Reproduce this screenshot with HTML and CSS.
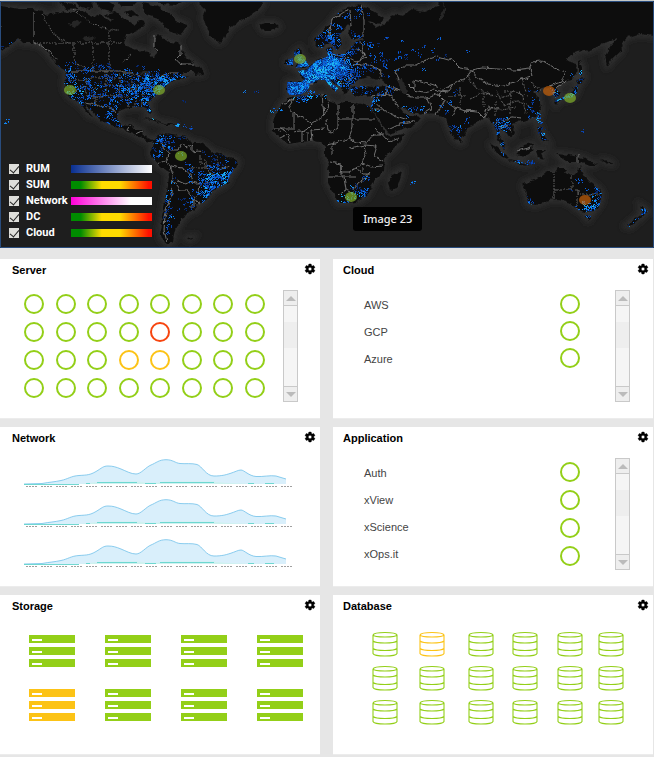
FILE: index.html
```html
<!DOCTYPE html>
<html lang="en">
<head>
<meta charset="utf-8">
<title>Operations dashboard</title>
<link rel="stylesheet" href="styles.css">
</head>
<body>
<svg class="defs" aria-hidden="true">
  <symbol id="gear" viewBox="0 0 24 24"><path d="M19.43 12.98c.04-.32.07-.64.07-.98s-.03-.66-.07-.98l2.11-1.65c.19-.15.24-.42.12-.64l-2-3.46c-.12-.22-.39-.3-.61-.22l-2.49 1c-.52-.4-1.08-.73-1.69-.98l-.38-2.65A.49.49 0 0 0 14 2h-4c-.25 0-.46.18-.49.42l-.38 2.65c-.61.25-1.17.59-1.69.98l-2.49-1c-.23-.09-.49 0-.61.22l-2 3.46c-.13.22-.07.49.12.64l2.11 1.65c-.04.32-.07.65-.07.98s.03.66.07.98l-2.11 1.65c-.19.15-.24.42-.12.64l2 3.46c.12.22.39.3.61.22l2.49-1c.52.4 1.08.73 1.69.98l.38 2.65c.03.24.24.42.49.42h4c.25 0 .46-.18.49-.42l.38-2.65c.61-.25 1.17-.59 1.69-.98l2.49 1c.23.09.49 0 .61-.22l2-3.46c.12-.22.07-.49-.12-.64zM12 15.5A3.5 3.5 0 1 1 12 8.500a3.500 3.500 0 0 1 0 7z" stroke="#000" stroke-width=".8"/></symbol>
  <symbol id="chart" viewBox="0 0 268 28" preserveAspectRatio="none">
    <path d="M0 25L18 24.500C26 23 30 23 37 21.500S47 17 55 16.500S66 16 72 12.500S79 7 84 7S92 8 97 10S107 15 112 15S122 8 127 6S135 .7 142 .7S151 4 156 4.500S168 4 173 5.500S182 17 190 17S201 16 206 14.500S214 11 217 11S225 17 232 17.500S246 16 252 17L262 20V25Z" fill="#d9effb"/>
    <path d="M0 25L18 24.500C26 23 30 23 37 21.500S47 17 55 16.500S66 16 72 12.500S79 7 84 7S92 8 97 10S107 15 112 15S122 8 127 6S135 .7 142 .7S151 4 156 4.500S168 4 173 5.500S182 17 190 17S201 16 206 14.500S214 11 217 11S225 17 232 17.500S246 16 252 17L262 20" fill="none" stroke="#6fc0ea" stroke-width=".8"/>
    <path d="M55 25Q75 22 95 22.500H115Q128 25 140 22.500H190Q205 25 262 25Z" fill="#cff2f0"/>
    <path d="M0 25.500H55M62 24.500h4M73 23.500h40M121 24.500h11M136 23.500h54M224 24.500h6M241 24.500h9" fill="none" stroke="#62d4cc" stroke-width=".9"/>
    <path d="M2 27.500H268" fill="none" stroke="#888" stroke-width=".8" stroke-dasharray="2 1 2 1 2 1 2 4"/>
  </symbol>
  <symbol id="db" viewBox="0 0 26 26"><path d="M1 4V22.500Q2 25 13 25T25 22.500V4M1 4Q2 1.500 13 1.500T25 4Q24 6 13 6T1 4M1 10Q3 12 13 12T25 10M1 17.500Q3 19.500 13 19.500T25 17.500" fill="none" stroke="currentColor" stroke-width="1.100"/></symbol>
</svg>

<header class="world">
  <svg class="map" viewBox="0 0 654 248" role="img" aria-label="World traffic map">
    <defs>
      <path id="land" d="M0 6L20 9L33 9L42 11L46 16L56 12L70 13L80 10L92 17L100 14L110 22L118 18L128 20L134 25L140 20L146 22L142 28L134 32L126 35L123 42L127 46L134 49L142 51L149 52L150 56L154 57L157 52L154 46L154 38L159 36L165 38L171 42L178 43L181 49L184 55L193 62L200 67L203 74L196 75L192 72L184 72L181 75L188 78L178 79L170 82L165 86L160 92L155 96L148 103L152 112L149 114L146 108L140 106L134 107L127 107L119 110L117 118L121 125L127 126L131 124L134 126L133 130L143 130L144 136L150 139L155 140L152 142L146 141L136 135L128 131L120 128L111 125L102 121L96 116L88 107L84 103L88 111L93 117L89 115L83 107L77 101L71 98L66 92L64 83L67 72L61 68L53 60L48 53L40 45L33 43L24 43L18 39L13 43L6 48L0 52Z
      M76 2L86 0L94 4L90 9L80 7ZM96 3L108 0L116 6L112 12L102 10ZM118 1L138 0L132 6L122 6ZM142 3L158 6L170 14L176 20L187 25L184 30L181 35L173 32L166 27L162 22L152 16L144 12ZM124 12L132 10L138 16L130 17ZM152 0L184 0L176 5L160 4ZM60 2L74 4L78 9L66 10ZM104 14L116 12L124 19L112 20Z
      M200 0L201 5L206 10L203 18L207 28L211 37L219 43L224 38L230 28L242 20L250 15L258 10L263 4L262 0ZM259 25L265 23L275 23L279 27L272 31L264 31Z
      M154 141L158 136L164 134L172 135L180 136L186 137L192 143L200 143L206 146L212 152L222 155L232 158L238 161L236 168L230 175L228 182L222 186L213 190L208 198L202 204L195 204L196 210L188 212L184 218L180 219L180 224L176 228L174 234L173 242L168 245L162 240L160 230L163 215L165 200L168 185L169 172L160 166L153 158L150 152L153 147ZM143 119L152 118L160 122L169 124L177 125L166 125L158 122L151 120ZM187 238L193 237L190 240Z
      M288 99L295 97L308 95L326 94L329 101L338 104L345 102L352 102L362 104L369 106L374 114L380 124L386 134L390 136L404 134L400 142L392 150L384 158L383 172L374 181L371 188L368 194L364 198L356 202L344 203L338 203L334 194L328 183L328 170L329 165L325 156L325 147L320 142L310 141L300 142L288 144L280 138L273 131L273 122L275 115L282 104ZM402 170L400 180L396 188L391 190L389 182L392 175Z
      M287 82L302 82L305 79L298 71L306 70L311 66L316 61L322 59L328 56L327 49L331 48L334 54L345 54L350 49L352 43L362 41L364 38L352 39L348 34L349 29L352 25L347 26L343 32L339 37L342 43L337 50L333 47L330 42L322 48L316 46L315 39L320 34L329 25L338 13L348 7L361 5L373 11L384 19L380 24L368 21L376 28L388 22L392 14L404 16L410 10L425 12L438 6L439 0L654 0V36L640 34L628 37L621 42L622 50L614 58L607 66L605 55L610 46L618 38L612 40L600 45L590 50L578 52L570 56L566 60L576 64L578 72L570 80L562 84L556 88L560 93L556 98L552 93L549 87L540 88L538 92L533 92L539 98L541 108L536 116L527 120L518 122L512 124L514 132L511 137L504 131L500 128L499 136L504 143L505 150L500 144L497 136L494 124L488 118L484 118L478 122L468 127L464 134L459 141L454 139L449 128L446 118L438 114L424 113L416 114L409 112L404 107L400 108L406 115L412 115L421 117L414 125L400 130L389 134L384 126L376 116L370 106L373 100L373 96L362 97L352 94L350 88L360 86L375 87L389 86L382 80L374 78L368 76L360 78L355 83L350 86L348 93L344 94L342 88L334 82L330 78L332 84L338 88L336 92L329 85L325 80L318 80L310 84L308 90L300 95L290 95L287 92Z
      M294 52L300 48L301 55L306 61L309 66L296 68L299 62L295 58ZM286 60L293 58L293 65L286 65ZM579 60L582 66L582 75L579 76ZM576 80L584 78L581 83L578 83ZM578 84L577 92L574 97L567 98L558 101L556 105L554 101L562 98L570 94L574 88ZM538 113L541 114L538 119ZM537 125L541 128L540 134L544 136L548 142L543 141L539 134ZM460 138L463 142L460 143Z
      M489 143L498 148L510 158L508 160L496 152ZM508 160L520 162L532 165L520 164ZM516 152L524 145L533 143L532 152L524 157L517 155ZM536 150L546 150L541 154L544 160L538 158ZM556 154L570 155L584 158L597 165L590 165L578 162L568 162L560 158ZM600 159L608 161L615 165L606 163Z
      M524 183L537 179L548 172L555 172L558 168L566 168L564 172L573 176L577 172L580 166L583 175L590 182L598 188L602 194L600 204L594 211L585 212L578 210L572 204L560 199L548 200L537 205L528 204L527 196L523 188ZM585 215L591 216L588 220ZM640 205L648 211L640 218L630 227L626 226L636 218L642 213Z"/>
      <clipPath id="coast"><use href="#land"/></clipPath>
      <filter id="rough" x="0" y="0" width="100%" height="100%"><feTurbulence type="fractalNoise" baseFrequency=".16" numOctaves="3" seed="4"/><feDisplacementMap in="SourceGraphic" scale="5" xChannelSelector="R" yChannelSelector="G"/></filter>
      <filter id="glow" x="-5%" y="-5%" width="110%" height="110%"><feGaussianBlur stdDeviation="3"/></filter>
    </defs>
    <rect width="654" height="248" fill="#1e1e1e"/>
    <use href="#land" fill="#303030" stroke="#303030" stroke-width="5" filter="url(#glow)"/>
    <use href="#land" fill="#0f0f0f" filter="url(#rough)"/>
    <g fill="#282828" filter="url(#rough)">
      <path d="M396 79L403 78L404 84L408 90L406 95L401 93L400 87ZM68 24L76 20L82 23L74 27ZM82 38L92 36L96 39L88 41ZM140 73L148 71L152 75L144 75ZM146 78L148 84L145 84ZM152 80L158 79L156 82ZM442 0L446 10L442 20L438 22L444 8Z"/>
    </g>
    <g class="borders" filter="url(#rough)">
      <path d="M33 10V43L40 45L50 52L56 61M71 71H120L123 73H134L142 77M152 80L162 76L170 73H178M84 102L96 104L103 108L110 106L115 113M128 130L131 125M136 134L143 131M154 36V46L158 51M181 44V55L176 60L181 64H196"/>
      <path d="M160 140L164 148L169 154L166 162L171 168L173 176L172 194L168 204L165 216L164 230L167 242M170 150H178L182 144L187 148L192 144M192 144V152L198 151L204 152M171 166L182 168L190 174L192 182L185 184L176 180M192 182L200 184L199 191L193 200L200 204M193 200V208M166 160L158 164M173 181L180 190L188 190L192 195"/>
      <path d="M283 104L294 99L288 108L294 113L312 124L324 116L322 94M294 113V129H274M312 124L306 130L294 132M302 140V130M308 141V132M312 141L311 130L325 129M324 116L330 100M338 105V128L332 132L328 130L326 119M353 103V119H375M353 119V128L349 138L356 142L366 143L374 134L384 134M353 119H338M376 128L389 142L398 138M326 145L336 143L349 138M332 155V146M350 148L364 145L366 154L362 163L356 168L349 172H341V164L330 162M364 145L377 146L374 156L383 161M362 163L372 167L382 166M328 177H356M341 164V177M344 178L346 190L352 193L358 183L365 178L370 172M338 195L346 190M356 168L363 174L370 174M279 129L286 132M290 142L288 134L280 138M363 166V172"/>
      <path d="M290 83L291 94M304 82L312 84M315 62L320 70L318 79M323 58L326 68L320 70M326 68L336 66L346 70M333 54L346 58L344 66M328 40L332 20L344 12L350 10L351 26M361 5L364 20V37M352 48L360 50L366 58L356 62L347 57M346 70L352 76L347 84M350 65L364 64L382 70L380 78M330 74L338 76L344 84M352 76L356 80M361 42L364 54L360 60M371 96L386 94L394 100L398 108M386 94L388 86L400 90M406 95L416 98L428 98L432 108L424 113M399 80L395 72L402 66L416 66L424 61L438 56L452 60L460 68L472 70L466 78L454 84L448 92L432 90L424 92L414 90L408 84M472 70L482 68L498 69L514 70L530 68L532 62L542 61L554 68L566 72L562 82L550 86M472 70L476 76L488 84L504 86L520 80L532 76L530 68M454 84L446 88L438 94L444 100L456 108L464 111L478 112L484 118M444 100L440 108L436 114M456 108L452 116M464 111L478 110M414 90V80L428 84L440 88M428 98L438 94M373 100L384 110L396 116L408 120M376 98L386 94M484 118L487 110L492 106M495 124L499 119L507 120L512 117L522 118M500 128L506 124L511 132M384 110H374M388 130L400 124L414 122M556 88L566 82M517 151L532 147M578 155V162"/>
      <path class="dashed" d="M42 14L48 24L56 36L68 43M34 43H122M74 44V60L84 68M93 44V70M109 31V70M73 10L94 25L109 30H119M121 63L132 54M71 80H86V96M86 78H106M106 71V94M76 92L84 85M106 78H120M106 85H124M120 71V96M124 80L132 90L138 96M132 75V85H148M136 87H154M126 90H142M128 96V106M136 94V106M142 94V106M116 96H130M94 88V104M86 96H116M96 96V104M150 82V90M192 168H206V160M200 155V164L212 166M206 168L214 176L206 184M218 156V170L230 166M212 166V182M196 184H214M554 173V200M572 176V190M554 190H577M577 190V210M577 194H600M466 76L476 88L492 96M470 98L484 92L500 98L514 92L528 96M484 92V108M496 90L504 106L516 100L530 106M496 102V116M510 94V114M520 90L526 114M488 106L502 110L516 108M530 82L540 90M522 78L526 92M448 96L466 96M460 86V106M504 92H522"/>
    </g>
    <path clip-path="url(#coast)" fill="#0a53c8" fill-opacity=".62" d="M286 57L294 51L304 58L310 66L324 55L340 58L350 66L346 76L332 78L339 92L322 82L308 90L300 97H286V80L304 80L296 72Z"/>
    <g id="lights" clip-path="url(#coast)"></g>
    <g id="sparks"></g>
    <g fill="#85b52b" fill-opacity=".68">
      <ellipse cx="70" cy="90" rx="6" ry="5"/><ellipse cx="159" cy="90" rx="6" ry="5"/><ellipse cx="181" cy="156" rx="6" ry="5"/><ellipse cx="300" cy="59" rx="6" ry="5"/><ellipse cx="351" cy="197" rx="6" ry="5"/><ellipse cx="570" cy="98" rx="6" ry="5"/>
    </g>
    <g fill="#c9630a" fill-opacity=".7"><ellipse cx="549" cy="91" rx="6" ry="5"/><ellipse cx="585" cy="200" rx="6" ry="5"/></g>
    <path d="M0 .5H654" stroke="#c4c8c6"/>
    <path d="M.5 1.500H653.500V247.500H.5Z" fill="none" stroke="#294c7d"/>
  </svg>
  <div class="legend">
    <label><input type="checkbox" checked><span>RUM</span><i class="scale blue"></i></label>
    <label><input type="checkbox" checked><span>SUM</span><i class="scale heat"></i></label>
    <label><input type="checkbox" checked><span>Network</span><i class="scale pink"></i></label>
    <label><input type="checkbox" checked><span>DC</span><i class="scale heat"></i></label>
    <label><input type="checkbox" checked><span>Cloud</span><i class="scale heat"></i></label>
  </div>
  <div class="tooltip">Image 23</div>
</header>

<main class="panels">
  <section class="panel">
    <div class="head"><h2>Server</h2><button class="settings" aria-label="Server settings"><svg><use href="#gear"/></svg></button></div>
    <div class="body">
      <div class="servers">
        <i class="ring"></i><i class="ring"></i><i class="ring"></i><i class="ring"></i><i class="ring"></i><i class="ring"></i><i class="ring"></i><i class="ring"></i>
        <i class="ring"></i><i class="ring"></i><i class="ring"></i><i class="ring"></i><i class="ring critical"></i><i class="ring"></i><i class="ring"></i><i class="ring"></i>
        <i class="ring"></i><i class="ring"></i><i class="ring"></i><i class="ring warning"></i><i class="ring warning"></i><i class="ring"></i><i class="ring"></i><i class="ring"></i>
        <i class="ring"></i><i class="ring"></i><i class="ring"></i><i class="ring"></i><i class="ring"></i><i class="ring"></i><i class="ring"></i><i class="ring"></i>
      </div>
      <div class="scroller"><button class="up" aria-label="Scroll up"></button><div class="track"></div><button class="down" aria-label="Scroll down"></button></div>
    </div>
  </section>

  <section class="panel">
    <div class="head"><h2>Cloud</h2><button class="settings" aria-label="Cloud settings"><svg><use href="#gear"/></svg></button></div>
    <div class="body">
      <ul class="names"><li>AWS</li><li>GCP</li><li>Azure</li></ul>
      <div class="states"><i class="ring"></i><i class="ring"></i><i class="ring"></i></div>
      <div class="scroller"><button class="up" aria-label="Scroll up"></button><div class="track"></div><button class="down" aria-label="Scroll down"></button></div>
    </div>
  </section>

  <section class="panel">
    <div class="head"><h2>Network</h2><button class="settings" aria-label="Network settings"><svg><use href="#gear"/></svg></button></div>
    <div class="charts"><svg><use href="#chart"/></svg><svg><use href="#chart"/></svg><svg><use href="#chart"/></svg></div>
  </section>

  <section class="panel">
    <div class="head"><h2>Application</h2><button class="settings" aria-label="Application settings"><svg><use href="#gear"/></svg></button></div>
    <div class="body">
      <ul class="names"><li>Auth</li><li>xView</li><li>xScience</li><li>xOps.it</li></ul>
      <div class="states loose"><i class="ring"></i><i class="ring"></i><i class="ring"></i><i class="ring"></i></div>
      <div class="scroller"><button class="up" aria-label="Scroll up"></button><div class="track"></div><button class="down" aria-label="Scroll down"></button></div>
    </div>
  </section>

  <section class="panel">
    <div class="head"><h2>Storage</h2><button class="settings" aria-label="Storage settings"><svg><use href="#gear"/></svg></button></div>
    <div class="storage">
      <div class="rack"><i></i><i></i><i></i></div><div class="rack"><i></i><i></i><i></i></div><div class="rack"><i></i><i></i><i></i></div><div class="rack"><i></i><i></i><i></i></div>
      <div class="rack warning"><i></i><i></i><i></i></div><div class="rack"><i></i><i></i><i></i></div><div class="rack"><i></i><i></i><i></i></div><div class="rack"><i></i><i></i><i></i></div>
    </div>
  </section>

  <section class="panel">
    <div class="head"><h2>Database</h2><button class="settings" aria-label="Database settings"><svg><use href="#gear"/></svg></button></div>
    <div class="databases">
      <svg><use href="#db"/></svg><svg class="warning"><use href="#db"/></svg><svg><use href="#db"/></svg><svg><use href="#db"/></svg><svg><use href="#db"/></svg><svg><use href="#db"/></svg>
      <svg><use href="#db"/></svg><svg><use href="#db"/></svg><svg><use href="#db"/></svg><svg><use href="#db"/></svg><svg><use href="#db"/></svg><svg><use href="#db"/></svg>
      <svg><use href="#db"/></svg><svg><use href="#db"/></svg><svg><use href="#db"/></svg><svg><use href="#db"/></svg><svg><use href="#db"/></svg><svg><use href="#db"/></svg>
    </div>
  </section>
</main>
<script src="lights.js"></script>
</body>
</html>
```
FILE: styles.css
```css
* { box-sizing: border-box; }
body { margin: 0; background: #e6e6e6; color: #000; font: 11px/16px "Liberation Sans", Arial, sans-serif; }
button { padding: 0; border: 0; background: none; }
.defs { position: absolute; width: 0; height: 0; }

.world { position: relative; background: #1e1e1e; }
.map { display: block; width: 100%; height: auto; }
.borders { fill: none; stroke: #8a8a8a; stroke-width: .8; }
.dashed { stroke: #777; stroke-dasharray: 2 1; }
.legend { position: absolute; left: 9px; bottom: 7px; color: #fff; font: bold 11px/16px Roboto, sans-serif; }
.legend label { display: grid; grid-template-columns: 17px 45px 81px; align-items: center; height: 16px; }
.legend input { appearance: none; display: grid; place-items: start center; width: 10px; height: 10px; margin: 0; background: #dededa; }
.legend input:checked::before { content: ""; width: 4px; height: 8px; border: solid #222; border-width: 0 1px 1px 0; transform: rotate(40deg); }
.scale { height: 8px; }
.blue { background: linear-gradient(90deg, #092f91, #fff); }
.heat { background: linear-gradient(90deg, #008c00 12%, #ffdc00 38%, #ffdc00 60%, #ff1000 96%); }
.pink { background: linear-gradient(90deg, #ff00d8, #fff 74%); }
.tooltip { position: absolute; left: 54%; bottom: 17px; padding: 4px 10px; border-radius: 3px; background: #020202; color: #eee; font: 500 11px/16px "Noto Sans", sans-serif; }

.panels { display: grid; grid-template-columns: 1fr 1fr; gap: 8px 13px; padding: 11px 1px 2px 0; }
.panel { min-height: 160px; background: #fff; border-bottom: 1px solid #ececec; }
.head { display: flex; justify-content: space-between; padding: 4px 4px 0 12px; }
.panel:nth-child(even) .head { padding-left: 10px; }
.head h2 { margin: 0; font-size: 11px; line-height: 14px; }
.settings { width: 12px; height: 12px; }
.settings svg { display: block; width: 12px; height: 12px; }
.body { display: flex; align-items: flex-start; padding: 13px 22px 0 24px; }
.panel:nth-child(even) .body { padding-right: 23px; }
.servers { flex: 1; display: grid; grid-template-columns: repeat(8, 20px); justify-content: space-between; gap: 8px 0; margin: 4px 18px 0 0; }
.ring { display: block; width: 20px; height: 20px; border: 2px solid #93cf18; border-radius: 50%; }
.ring.warning { border-color: #fcc316; }
.ring.critical { border-color: #f7450f; }
.names { flex: 1; margin: 2px 0 0; padding: 0 0 0 7px; list-style: none; color: #444; line-height: 27px; }
.states { display: grid; gap: 7px; margin: 4px 35px 0 0; }
.states.loose { gap: 8px; }
.scroller { display: flex; flex-direction: column; width: 15px; height: 112px; border: 1px solid #c9c9c9; background: #f5f5f5; }
.scroller button { display: grid; place-items: center; height: 14px; background: #eee; }
.scroller button::before { content: ""; border: solid transparent; border-width: 0 5px; }
.scroller .up::before { border-bottom: 5px solid #bbb; }
.scroller .down::before { border-top: 5px solid #bbb; }
.track { flex: 1; border: solid #c9c9c9; border-width: 1px 0; background: linear-gradient(#f5f5f5 20%, #eee 20% 52%, #f5f5f5 52%); }

.charts { display: grid; gap: 12px; padding: 14px 28px 0 24px; }
.charts svg { display: block; width: 100%; height: 28px; }

.storage { display: grid; grid-template-columns: repeat(4, 46px); justify-content: space-between; gap: 22px 0; padding: 22px 17px 0 29px; }
.rack { display: grid; gap: 4px; color: #93cf18; }
.rack.warning { color: #fcc316; }
.rack i { height: 8px; padding: 4px 3px 0; background: currentColor; }
.rack i::before { content: ""; display: block; width: 10px; height: 2px; background: #fff; }

.databases { display: grid; grid-template-columns: 47fr 49fr 45fr 45fr 41fr 26px; gap: 8px 0; padding: 18px 29px 0 39px; color: #93cf18; }
.databases svg { display: block; width: 26px; height: 26px; }
.databases .warning { color: #fcc316; }
```
FILE: lights.js
```js
// Scatters city lights around population centres: [x, y, spread x, spread y, count, brightness]
const inland = [
  [145, 88, 16, 10, 620, .45], [160, 83, 9, 5, 260, .7], [125, 95, 18, 12, 240, .35], [96, 90, 14, 8, 170, .4],
  [70, 75, 4, 6, 80, .5], [74, 96, 5, 6, 110, .7], [85, 68, 14, 4, 70, .25], [112, 118, 10, 6, 90, .4],
  [147, 109, 3, 4, 60, .7], [115, 72, 18, 6, 70, .2], [180, 77, 9, 3, 60, .3],
  [164, 143, 5, 5, 110, .4], [155, 153, 3, 4, 40, .3], [180, 136, 8, 3, 50, .3],
  [218, 180, 9, 6, 380, .7], [206, 192, 6, 6, 170, .6], [226, 163, 10, 8, 150, .3], [200, 172, 14, 10, 90, .2],
  [168, 205, 3, 14, 80, .4], [190, 205, 8, 6, 60, .4],
  [298, 88, 9, 6, 480, .7], [312, 73, 9, 7, 600, .75], [324, 66, 10, 7, 640, .75], [302, 60, 5, 7, 230, .6],
  [289, 62, 3, 3, 60, .4], [338, 64, 9, 7, 400, .5], [331, 84, 5, 6, 220, .8], [346, 78, 8, 7, 230, .3],
  [330, 41, 9, 10, 280, .4], [350, 12, 12, 5, 60, .2], [352, 42, 10, 7, 100, .3], [366, 66, 14, 10, 150, .2],
  [372, 89, 14, 4, 90, .25], [374, 103, 3, 4, 50, .6], [390, 55, 22, 10, 70, .3], [430, 60, 26, 10, 30, .2],
  [412, 113, 7, 5, 40, .5], [452, 112, 12, 14, 60, .35], [456, 128, 5, 8, 30, .3],
  [500, 127, 5, 5, 150, .5], [504, 144, 3, 6, 60, .6], [535, 103, 7, 10, 55, .4], [553, 95, 3, 4, 80, .7],
  [566, 98, 7, 3, 160, .7], [577, 85, 3, 7, 80, .5], [539, 116, 2, 3, 30, .8], [541, 132, 4, 5, 50, .5],
  [525, 162, 12, 2, 80, .6], [360, 190, 5, 6, 110, .5], [344, 202, 8, 3, 60, .6], [590, 208, 8, 4, 180, .7],
  [599, 194, 4, 8, 110, .6], [528, 201, 3, 4, 40, .7], [585, 182, 9, 9, 40, .4], [643, 212, 6, 6, 70, .6],
  [632, 223, 5, 3, 50, .6], [588, 217, 3, 2, 25, .6], [14, 42, 6, 4, 20, .4], [265, 30, 4, 2, 12, .5]
];
const islands = [
  [175, 124, 9, 1, 18, .6], [253, 92, 4, 1, 6, .5], [274, 109, 3, 2, 9, .6], [4, 121, 2, 1, 6, .7],
  [413, 182, 3, 1, 6, .5], [585, 131, 2, 1, 4, .4], [527, 162, 10, 1, 22, .6], [538, 116, 1, 3, 10, .8],
  [541, 132, 3, 5, 18, .5], [312, 92, 4, 1, 14, .5], [189, 129, 2, 3, 6, .3], [180, 102, 1, 1, 3, .4]
];
const colors = ["#07296f", "#0a43ad", "#0a62d8", "#128bf0", "#1fb9ea"];
let seed = 1729;
const random = () => (seed = (seed * 16807) % 2147483647) / 2147483647;
const spread = () => (random() + random() + random() - 1.5) * 1.8;

// Lights come in small towns of about five points that share a tone.
function scatter(id, clusters) {
  const paths = colors.map(() => "");
  for (const [x, y, sx, sy, count, bright] of clusters) {
    for (let town = 0; town < count; town += 4) {
      const tx = x + spread() * sx, ty = y + spread() * sy;
      const level = random() * (1.8 + bright * 3.6);
      for (let i = 0; i < 5; i++) {
        const px = Math.round(tx + spread() * 1.3), py = Math.round(ty + spread() * 1.1);
        const tone = Math.max(0, Math.min(4, Math.floor(level + random() - .5)));
        paths[tone] += `M${px} ${py}h1v1h-1z`;
      }
    }
  }
  const group = document.getElementById(id);
  paths.forEach((d, i) => {
    const path = document.createElementNS("http://www.w3.org/2000/svg", "path");
    path.setAttribute("d", d);
    path.setAttribute("fill", colors[i]);
    group.append(path);
  });
}
scatter("lights", inland);
scatter("sparks", islands);
```
